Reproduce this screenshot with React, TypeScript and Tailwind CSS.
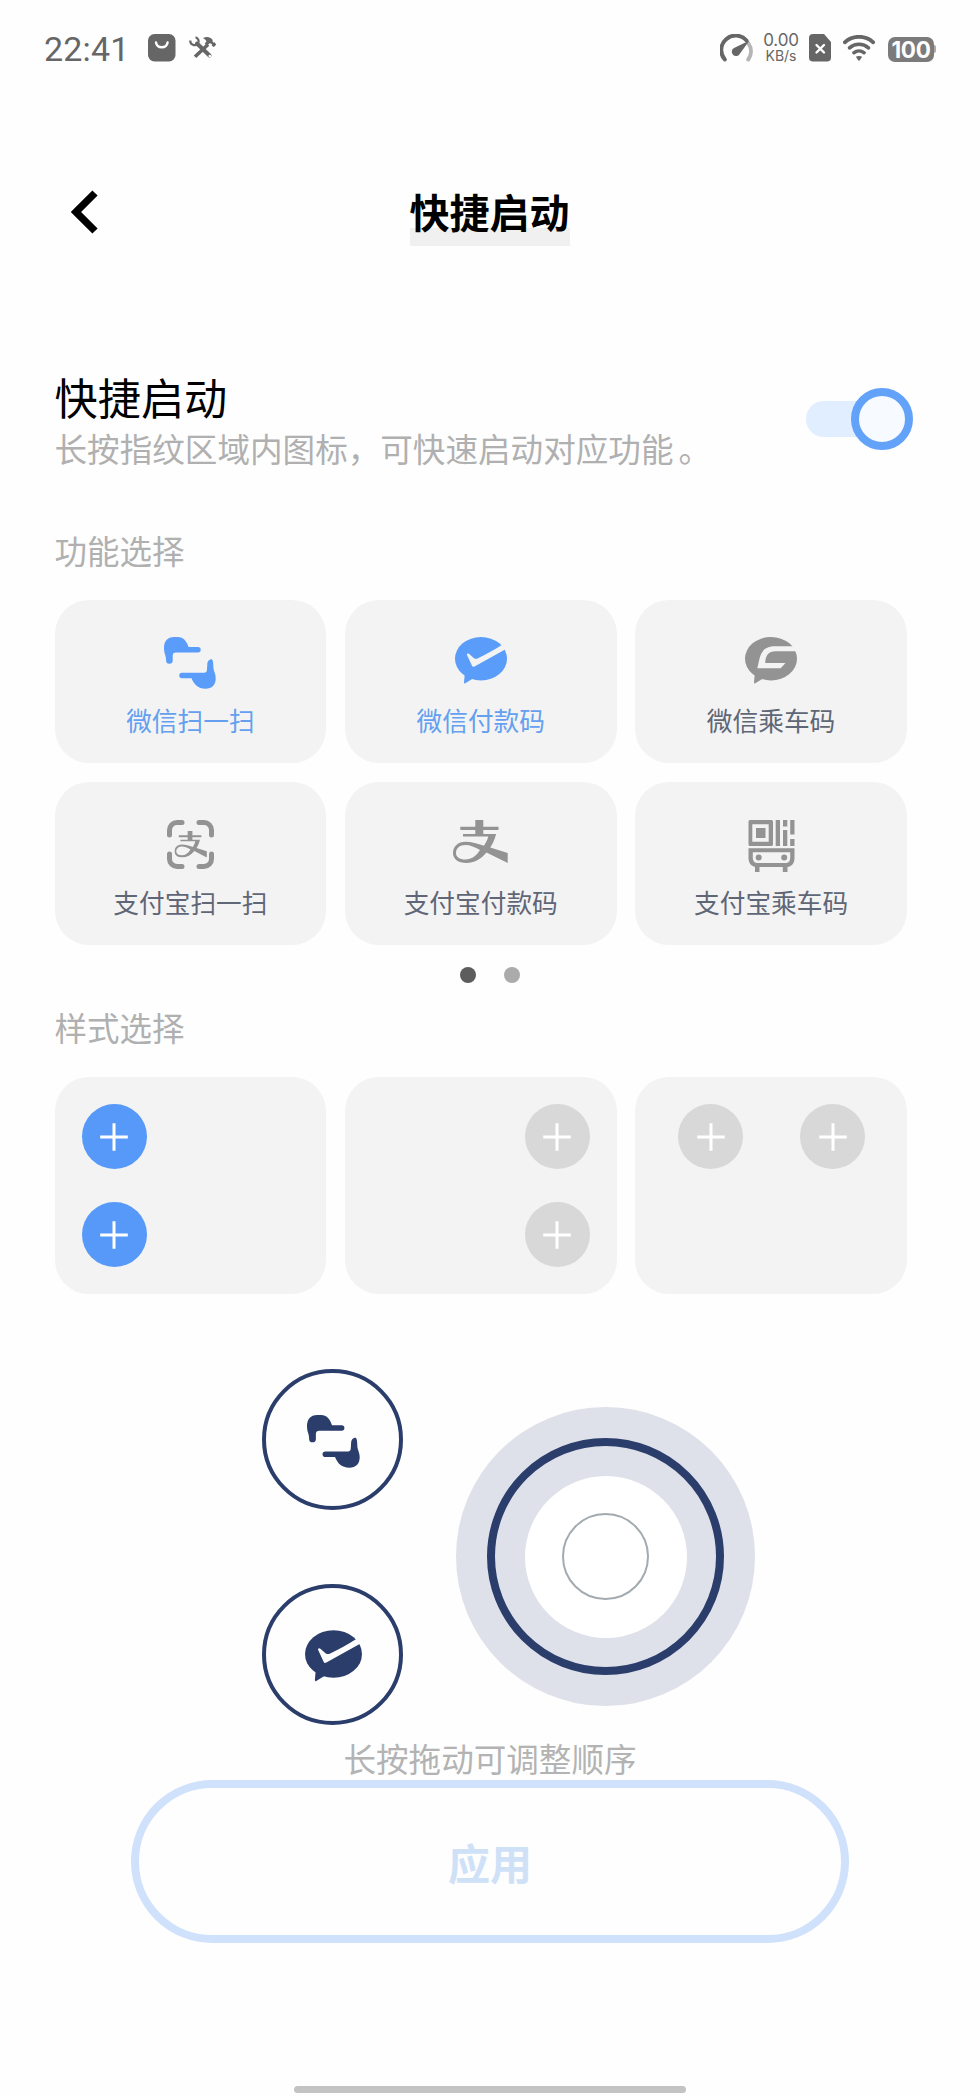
import type { ReactNode } from 'react'
import clsx from 'clsx'

type IconProps = { className?: string; cutout?: string }

function ScanHands({ className }: IconProps) {
  return (
    <svg viewBox="0 0 52 52" className={className} fill="currentColor">
      <path d="M10 0h4c5 0 8.700 4 10.500 10H34a2.700 2.700 0 0 1 0 5.400H12c-2.500 0-3.300 1.100-3.300 3.600v4.500a3.300 3.300 0 0 1-6.600 0C2.100 18 0 17 0 11 0 4 3.500 0 10 0Z" />
      <path d="M18 35.800h22c2.300 0 3-1.300 3-3.800l.3-4.500c0-3 1.700-5.200 4.500-5.200 2 1.700 1.200 7.700 2 10.700.9 3 1.900 5 1.900 8.500 0 6.500-3.700 10.200-10.200 10.200-7.500 0-11.500-4.200-14-10.400H18a2.750 2.750 0 0 1 0-5.500Z" />
    </svg>
  )
}

function PayBubble({ className, cutout }: IconProps) {
  return (
    <svg viewBox="0 0 52 47" className={className} fill="currentColor">
      <ellipse cx="26" cy="21.700" rx="26" ry="21.700" />
      <path d="M9.700 37.500 9 45.500q0 1.300 1.300.8L18 41.500Z" />
      <path className={cutout} d="M11.800 17.600q.5-1.600 2.200-.8l5 4.400q1.500 1 3.500.2C31 17.500 40 12.500 47.500 7.500L51.500 11.700 19.500 29.500q-1.800 1-2.500-.7Z" />
    </svg>
  )
}

function RideBubble({ className, cutout }: IconProps) {
  return (
    <svg viewBox="0 0 52 47" className={className} fill="currentColor">
      <ellipse cx="26" cy="21.700" rx="26" ry="21.700" />
      <path d="M9.700 37.500 9 45.500q0 1.300 1.300.8L18 41.500Z" />
      <path className={cutout} d="M52 9.300H30C20 9.300 16.500 14.500 14.800 20.500L12.300 31.300h23.400l4.800-5.300H20.200c.3-7.500 3.300-11.700 10.300-11.700H52Z" />
    </svg>
  )
}

function AlipayShape() {
  return (
    <path
      fill="currentColor"
      d="M22.300 0h8v6.700h15.200V10H30.300v4h12.800c-1.300 5.300-3.300 9.700-5.800 13.500L54.700 33v10L33.500 32.500C28 39 21 43 13.500 43 5 43 0 39 0 33 0 26.500 5 21.800 12.500 21.800c6 0 12 1.700 18.500 4 1.800-3 3.200-5.500 4.300-9.300H10V14h12.300v-4h-15V6.700h15ZM12.500 25C6.500 25 3 28.500 3 33c0 4 3.500 6.500 9.500 6.500 6 0 11-3.700 14.500-9.500-5-3-10-5-14.500-5Z"
    />
  )
}

function AlipayMark({ className }: IconProps) {
  return (
    <svg viewBox="0 0 55 43" className={className}>
      <AlipayShape />
    </svg>
  )
}

function AlipayScan({ className }: IconProps) {
  return (
    <svg viewBox="0 0 47 49" className={className}>
      <path
        fill="none"
        stroke="currentColor"
        strokeWidth="5"
        strokeLinecap="round"
        d="M15 2.500h-5A7.500 7.500 0 0 0 2.500 10v5M32 2.500h5a7.500 7.500 0 0 1 7.500 7.500v5M15 46.500h-5A7.500 7.500 0 0 1 2.500 39v-5M32 46.500h5a7.500 7.500 0 0 0 7.500-7.500v-5"
      />
      <svg x="7.500" y="11" width="32.500" height="26.500" viewBox="0 0 55 43" preserveAspectRatio="none">
        <AlipayShape />
      </svg>
    </svg>
  )
}

function BusCode({ className }: IconProps) {
  return (
    <svg viewBox="0 0 47 52" className={className} fill="currentColor">
      <path fillRule="evenodd" d="M2 0h21.500q1.500 0 1.500 1.500v23q0 1.500-1.500 1.500H2q-1.500 0-1.500-1.500v-23Q.5 0 2 0Zm2.300 4.300v17.400h16.400V4.300Z" />
      <path d="M8 8h9.500v10H8ZM27.700 0H32v26h-4.300ZM35 0h4.300v6.500H35ZM35 10h4.300v16H35ZM42.200 0h4.300v14.500h-4.300ZM42.200 19h4.300v7h-4.300Z" />
      <path fillRule="evenodd" d="M.5 28.300h46V38c0 5-2.500 8.500-7 9v5h-4.700v-5H11.500v5H7v-5.200C3 46 .5 43 .5 38Zm4.300 4V38c0 3 1.700 5 4.700 5h28c3 0 4.700-2 4.700-5v-5.700Z" />
      <circle cx="10.700" cy="37.500" r="3" />
      <circle cx="36.200" cy="37.500" r="3" />
    </svg>
  )
}

const functions = [
  { label: '微信扫一扫', active: true, icon: <ScanHands className="h-[52px] w-[52px]" /> },
  { label: '微信付款码', active: true, icon: <PayBubble className="h-[47px] w-[52px]" cutout="fill-[#f3f3f3]" /> },
  { label: '微信乘车码', active: false, icon: <RideBubble className="h-[47px] w-[52px]" cutout="fill-[#f3f3f3]" /> },
  { label: '支付宝扫一扫', active: false, icon: <AlipayScan className="mt-[1px] h-[49px] w-[47px]" /> },
  { label: '支付宝付款码', active: false, icon: <AlipayMark className="mt-[1px] h-[43px] w-[55px]" /> },
  { label: '支付宝乘车码', active: false, icon: <BusCode className="mt-[1px] h-[52px] w-[47px]" /> },
]

const styles = [
  { id: 'left', active: true, layout: 'flex-col items-start gap-[33px] pl-[27px]' },
  { id: 'right', active: false, layout: 'flex-col items-end gap-[33px] pr-[27px]' },
  { id: 'top', active: false, layout: 'items-start justify-center gap-[57px] pl-[1px]' },
]

function StatusBar() {
  return (
    <header className="flex h-[95px] items-center pr-[44px] pl-[44px] text-[#666]">
      <span className="mt-[2px] w-[104px] font-['Roboto','Noto_Sans',sans-serif] text-[34px] leading-none tracking-[0.2px]">
        22:41
      </span>
      <svg viewBox="0 0 28 28" className="h-[28px] w-[28px]">
        <rect width="27.500" height="27.500" rx="6.500" fill="currentColor" />
        <path d="M8 8.500a5.900 5.900 0 0 0 11.600 0" fill="none" stroke="#fff" strokeWidth="2.400" strokeLinecap="round" />
      </svg>
      <svg viewBox="0 0 28 24" className="ml-[13px] h-[24px] w-[28px]" fill="none" stroke="currentColor">
        <path d="M8 7.500 20.500 19.500" strokeWidth="4" strokeLinecap="round" />
        <path d="M19 8.500 6 20.800" strokeWidth="3.600" />
        <path d="M1.300 4.500a4.300 4.300 0 0 0 7.500 3.200A4.200 4.200 0 0 0 6.500 1.200" strokeWidth="2.200" />
        <path fill="currentColor" stroke="none" d="M14 2c3.500-2 7.500-1.200 9.300 1.500l.7 3 1.500-.3 1.700 2.300-2.200 2.500-2.200-1.300.2-1.700-2.500-.7-2.300 2.400-2.400-2.200 1.700-2.200q-1-2-3.500-3.300Z" />
        <circle cx="20.800" cy="20" r="1.300" fill="#fff" stroke="none" />
      </svg>

      <svg viewBox="0 0 33 28" className="ml-auto h-[28px] w-[33px]" fill="none">
        <path d="M28.500 9.500A14 14 0 0 1 28.300 25.500" stroke="#b5b5b5" strokeWidth="4" strokeLinecap="round" />
        <path d="M4.800 25.500A14 14 0 0 1 26.500 6.500" stroke="currentColor" strokeWidth="4" strokeLinecap="round" />
        <path fill="currentColor" d="M29.500 6.500 20 19.500a4.300 4.300 0 1 1-6-5.500Z" />
      </svg>
      <div className="ml-[10px] flex w-[36px] flex-col items-center font-['Inter','Roboto',sans-serif]">
        <span className="text-[17px] leading-[15px] tracking-[-0.200px]">0.00</span>
        <span className="text-[14px] leading-[15px]">KB/s</span>
      </div>
      <svg viewBox="0 0 22 28" className="ml-[10px] h-[28px] w-[22px]">
        <path fill="currentColor" d="M4 0h11l7 8v15.500a4 4 0 0 1-4 4H4a4 4 0 0 1-4-4V4a4 4 0 0 1 4-4Z" />
        <path d="m7.500 11 7.500 7.500m0-7.500-7.500 7.500" stroke="#fff" strokeWidth="2.400" strokeLinecap="round" />
      </svg>
      <svg viewBox="0 0 32 26" className="ml-[12px] h-[26px] w-[32px]" fill="none" stroke="currentColor">
        <path d="M1.800 7.300a21 21 0 0 1 28.400 0" strokeWidth="3.800" strokeLinecap="round" />
        <path d="M6.500 12.800a14.500 14.500 0 0 1 19 0" strokeWidth="3.600" strokeLinecap="round" />
        <path d="M10.800 17.800a8.500 8.500 0 0 1 10.400 0" strokeWidth="3.400" strokeLinecap="round" />
        <path d="M12.800 21.700q3.200-1.600 6.400 0L16.600 25.500q-.6.600-1.200 0Z" fill="currentColor" stroke="none" />
      </svg>
      <div className="mt-[3px] ml-[13px] flex items-center">
        <span className="h-[25px] w-[46px] rounded-[7px] bg-[#7b7b7b] text-center font-['Inter',sans-serif] text-[22.500px] leading-[25px] font-bold tracking-[-0.300px] text-white">
          100
        </span>
        <span className="h-[8px] w-[2px] rounded-r-full bg-[#aaa]" />
      </div>
    </header>
  )
}

function SectionLabel({ children }: { children: ReactNode }) {
  return <h3 className="h-[40px] text-[32.500px] leading-[40px] text-[#b0b0b0]">{children}</h3>
}

function AddButton({ active }: { active: boolean }) {
  return (
    <span className={clsx('flex size-[65px] items-center justify-center rounded-full', active ? 'bg-[#5799f8]' : 'bg-[#d8d8d8]')}>
      <svg viewBox="0 0 28 28" className="size-[28px]" stroke="#fff" strokeWidth="3">
        <path d="M14 .2v27.600M.2 14h27.600" />
      </svg>
    </span>
  )
}

export default function App() {
  return (
    <div className="flex h-[2096px] w-[980px] flex-col overflow-hidden bg-[#fefefe] font-['Noto_Sans_CJK_SC',sans-serif]">
      <StatusBar />

      <div className="mt-[83px] grid h-[68px] grid-cols-[1fr_auto_1fr] items-center pl-[71px]">
        <svg viewBox="0 0 27 44" className="h-[44px] w-[27px]">
          <path d="M24 3 5 22l19 19" fill="none" stroke="#000" strokeWidth="7.400" />
        </svg>
        <h1 className="-ml-[72px] h-[68px] bg-[linear-gradient(transparent_50px,#f0f0f0_50px)] text-[40px] leading-[67px] font-bold text-black">
          快捷启动
        </h1>
      </div>

      <main className="mt-[125px] ml-[54.5px] flex w-[852.5px] flex-col self-start">
        <div className="flex h-[104px] items-start justify-between">
          <div>
            <h2 className="h-[50px] text-[43.200px] leading-[51px] text-black">快捷启动</h2>
            <p className="text-[32.600px] leading-[54px] text-[#b0b0b0]">
              长按指纹区域内图标，可快速启动对应功能<span className="ml-[5px]">。</span>
            </p>
          </div>
          <button className="mt-[17px] -mr-[6px] flex h-[62px] w-[107px] items-center" role="switch" aria-checked="true">
            <span className="h-[36px] w-[80px] rounded-full bg-[#e1eeff]" />
            <span className="-ml-[35px] size-[62px] shrink-0 rounded-full border-8 border-[#62a2f9] bg-[#f7fbff]" />
          </button>
        </div>

        <div className="mt-[55px]">
          <SectionLabel>功能选择</SectionLabel>
        </div>
        <div className="mt-[30px] grid grid-cols-3 gap-x-[18.5px] gap-y-[19px]">
          {functions.map(item => (
            <div key={item.label} className="flex h-[163px] flex-col items-center rounded-[34px] bg-[#f3f3f3] pt-[37px]">
              <div className={clsx('h-[64px]', item.active ? 'text-[#5a9cf9]' : 'text-[#939393]')}>{item.icon}</div>
              <span className={clsx('text-[25.700px] leading-[38px]', item.active ? 'text-[#649ff0]' : 'text-[#5f6676]')}>
                {item.label}
              </span>
            </div>
          ))}
        </div>

        <div className="mt-[22px] flex justify-center gap-[28px] pl-[18px]">
          <span className="size-[16px] rounded-full bg-[#5d5d5d]" />
          <span className="size-[16px] rounded-full bg-[#ababab]" />
        </div>

        <div className="mt-[24px]">
          <SectionLabel>样式选择</SectionLabel>
        </div>
        <div className="mt-[30px] grid grid-cols-3 gap-x-[18.5px]">
          {styles.map(style => (
            <div key={style.id} className={clsx('flex h-[217px] rounded-[34px] bg-[#f3f3f3] pt-[27px]', style.layout)}>
              <AddButton active={style.active} />
              <AddButton active={style.active} />
            </div>
          ))}
        </div>
      </main>

      {/* fingerprint preview */}
      <div className="mt-[75px] flex h-[356px] items-center gap-[53px] pl-[262px] text-[#2b3d6b]">
        <div className="flex h-full flex-col justify-between">
          <span className="flex size-[141px] items-center justify-center rounded-full border-4 border-current pt-[3px] pl-[2px]">
            <ScanHands className="h-[53px] w-[53px]" />
          </span>
          <span className="flex size-[141px] items-center justify-center rounded-full border-4 border-current pt-[2px] pl-[2px]">
            <PayBubble className="h-[52px] w-[57px]" cutout="fill-[#fefefe]" />
          </span>
        </div>
        <div className="mt-[19px] flex size-[299px] items-center justify-center rounded-full bg-[#dfe1ea]">
          <div className="flex size-[237px] items-center justify-center rounded-full border-8 border-current">
            <div className="flex size-[162px] items-center justify-center rounded-full bg-white">
              <div className="size-[87px] rounded-full border-2 border-[#a3abb0]" />
            </div>
          </div>
        </div>
      </div>

      <p className="mt-[12px] h-[40px] text-center text-[32.600px] leading-[42px] text-[#b3b3b3]">长按拖动可调整顺序</p>
      <button className="mt-[3px] h-[163px] w-[718px] self-center rounded-full border-8 border-[#cfe1fb] pb-[1px] text-[42px] font-bold text-[#cfe1f7]">
        应用
      </button>

      <div className="mt-auto mb-[3px] h-[7px] w-[392px] self-center rounded-full bg-[#c3c3c3]" />
    </div>
  )
}
